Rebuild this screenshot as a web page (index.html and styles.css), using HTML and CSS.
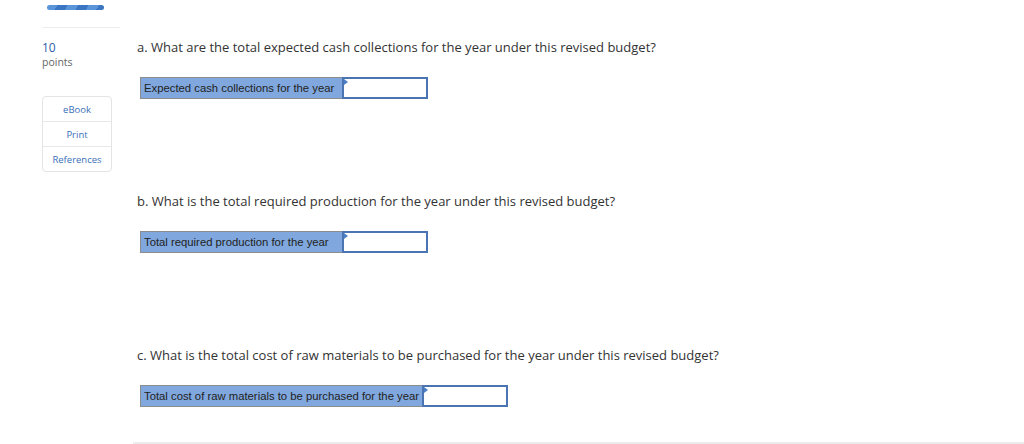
FILE: index.html
```html
<!DOCTYPE html>
<html>
<head>
<meta charset="utf-8">
<link rel="stylesheet" href="styles.css">
</head>
<body>
<div class="page">
  <aside class="side">
    <div class="progress"></div>
    <div class="rule"></div>
    <div class="score">10</div>
    <div class="points">points</div>
    <div class="tools">
      <div class="tool">eBook</div>
      <div class="tool">Print</div>
      <div class="tool">References</div>
    </div>
  </aside>
  <main class="main">
    <section class="q">
      <p class="qtext">a. What are the total expected cash collections for the year under this revised budget?</p>
      <div class="answer">
        <div class="label">Expected cash collections for the year</div>
        <div class="input"><span class="flag"></span></div>
      </div>
    </section>
    <section class="q">
      <p class="qtext">b. What is the total required production for the year under this revised budget?</p>
      <div class="answer">
        <div class="label">Total required production for the year</div>
        <div class="input"><span class="flag"></span></div>
      </div>
    </section>
    <section class="q">
      <p class="qtext">c. What is the total cost of raw materials to be purchased for the year under this revised budget?</p>
      <div class="answer">
        <div class="label">Total cost of raw materials to be purchased for the year</div>
        <div class="input"><span class="flag"></span></div>
      </div>
    </section>
    <div class="bottom"></div>
  </main>
</div>
</body>
</html>
```
FILE: styles.css
```css
html, body {
  margin: 0;
  padding: 0;
  background: #fff;
}
body {
  font-family: "Open Sans", "Liberation Sans", sans-serif;
  color: #333;
}
.page {
  display: flex;
  padding-left: 42px;
}
.side {
  width: 78px;
  flex: none;
}
.progress {
  margin: 5px 0 0 5px;
  width: 57px;
  height: 5px;
  border-radius: 3px;
  background: repeating-linear-gradient(120deg, #5a95da 0 9px, #3b76c2 9px 18px);
}
.rule {
  margin-top: 17px;
  height: 1px;
  background: #ededed;
}
.score {
  margin-top: 13px;
  font-size: 12px;
  line-height: 14px;
  color: #2b5ea6;
}
.points {
  font-size: 10.5px;
  line-height: 14px;
  color: #666;
}
.tools {
  margin-top: 27px;
  width: 68px;
  border: 1px solid #e4e4e4;
  border-radius: 4px;
}
.tool {
  height: 24px;
  display: flex;
  align-items: center;
  justify-content: center;
  font-size: 9.5px;
  color: #3a6fb8;
  border-top: 1px solid #e8e8e8;
}
.tool:first-child {
  border-top: none;
}
.main {
  flex: 1;
  margin-left: 13px;
  padding-top: 39px;
}
.q {
  padding-left: 4px;
  margin-bottom: 94px;
}
.q:last-of-type {
  margin-bottom: 35px;
}
.qtext {
  margin: 0 0 22px 0;
  font-size: 13px;
  line-height: 16px;
  color: #333;
}
.answer {
  display: flex;
  margin-left: 3px;
  height: 22px;
}
.label {
  box-sizing: border-box;
  min-width: 202px;
  border: 1px solid #8c8c8c;
  border-right: none;
  background: #80a8de;
  font-family: "Liberation Sans", Arial, sans-serif;
  font-size: 11.3px;
  color: #222;
  padding: 0 3px;
  display: flex;
  align-items: center;
}
.input {
  position: relative;
  box-sizing: border-box;
  width: 86px;
  border: 2px solid #4b74b3;
  background: #fff;
}
.flag {
  position: absolute;
  left: 0;
  top: 0;
  width: 0;
  height: 0;
  border-top: 3px solid transparent;
  border-bottom: 3px solid transparent;
  border-left: 4px solid #4b80c8;
}
.bottom {
  height: 2px;
  background: #ececec;
}
```
